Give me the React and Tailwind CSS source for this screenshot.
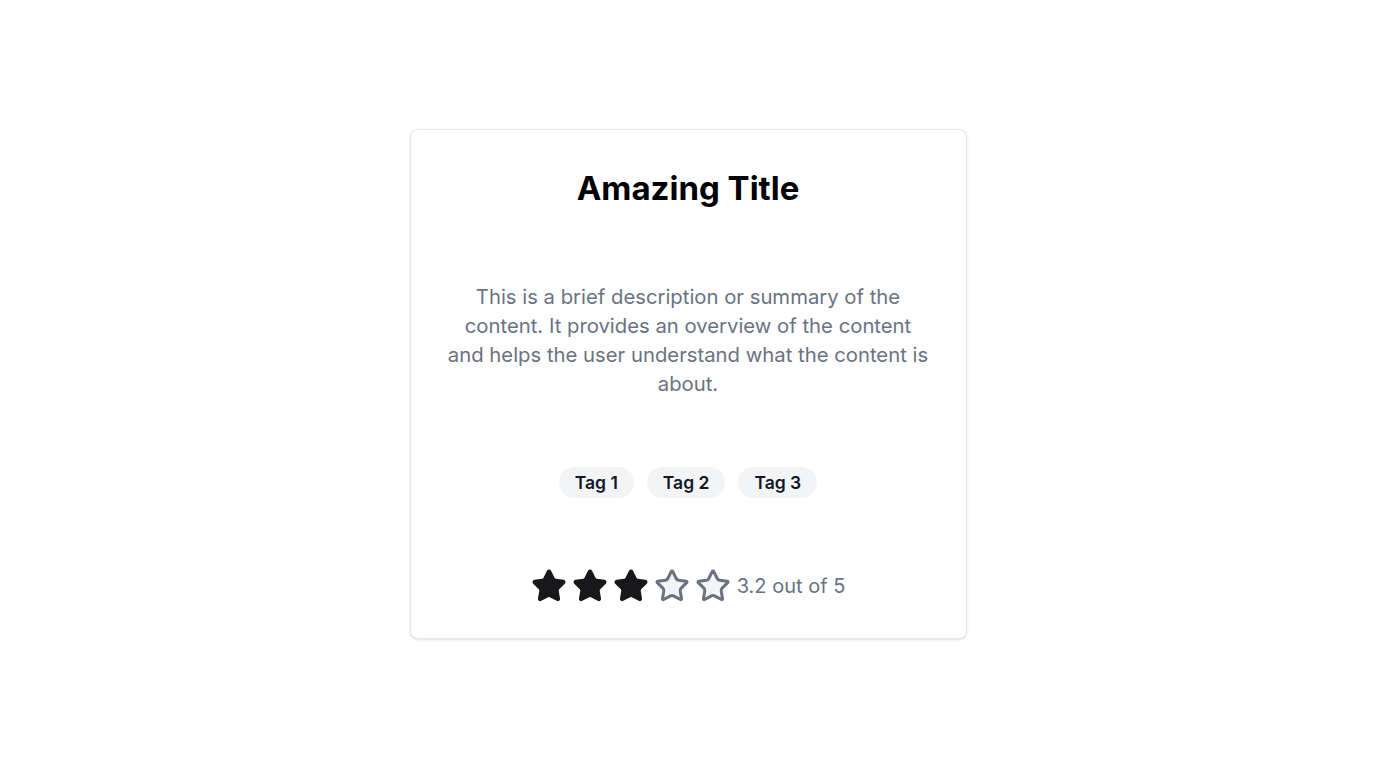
import { Star } from "lucide-react";

const tags = ["Tag 1", "Tag 2", "Tag 3"];

const Rating = ({ value }) => {
  return (
    <div className="flex items-center gap-[5px]">
      {[1, 2, 3, 4, 5].map((i) => {
        const filled = i <= Math.floor(value);
        return (
          <Star
            key={i}
            size={36}
            strokeWidth={2}
            className={filled ? "fill-[#18181b] text-[#18181b]" : "fill-gray-100 text-gray-500"}
          />
        );
      })}
      <span className="ml-[1px] text-xl text-gray-500">{value} out of 5</span>
    </div>
  );
};

export default function App() {
  return (
    <div className="min-h-screen bg-white flex justify-center pt-[129px] font-['Inter',sans-serif]">
      <div className="w-[557px] h-[510px] rounded-lg border border-gray-200 shadow-sm bg-white px-8 pt-10 flex flex-col items-center text-center">
        <h2 className="text-[33px] leading-9 font-bold text-black">Amazing Title</h2>

        <p className="mt-[76px] w-[485px] text-[20.3px] leading-[29px] text-gray-500">
          This is a brief description or summary of the content. It provides an overview of the
          content and helps the user understand what the content is about.
        </p>

        <div className="mt-[69px] flex gap-[13px]">
          {tags.map((tag) => (
            <span
              key={tag}
              className="px-4 py-[2px] leading-[27px] rounded-full bg-gray-100 text-[17.5px] font-semibold text-gray-900"
            >
              {tag}
            </span>
          ))}
        </div>

        <div className="mt-[70px]">
          <Rating value={3.2} />
        </div>
      </div>
    </div>
  );
}
